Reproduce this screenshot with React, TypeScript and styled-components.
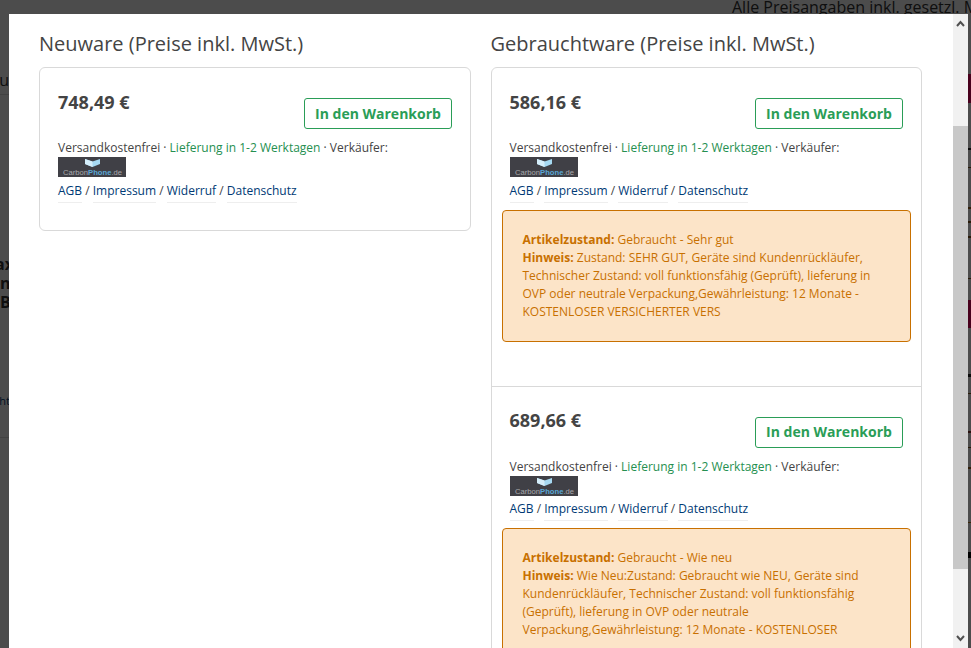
import React from "react";
import styled, { createGlobalStyle } from "styled-components";

const Global = createGlobalStyle`
  html, body { margin: 0; padding: 0; height: 100%; overflow: hidden; background: #fff; }
  #root { height: 100%; }
  * { box-sizing: border-box; }
`;

const Page = styled.div`
  position: relative;
  width: 971px;
  height: 648px;
  overflow: hidden;
  background: #fff;
  font-family: "Open Sans", "Liberation Sans", sans-serif;
`;

const BackLine = styled.div<{ $top: number }>`
  position: absolute;
  left: 0;
  top: ${(p) => p.$top}px;
  width: 9px;
  height: 1px;
  background: #ddd;
`;

const BackText = styled.span<{ $x: number; $y: number; $bold?: boolean; $size?: number; $color?: string }>`
  position: absolute;
  left: ${(p) => p.$x}px;
  top: ${(p) => p.$y}px;
  font-size: ${(p) => p.$size ?? 16}px;
  line-height: 20px;
  font-weight: ${(p) => (p.$bold ? 700 : 400)};
  color: ${(p) => p.$color ?? "#333"};
  white-space: nowrap;
`;

const BackBlock = styled.div<{ $top: number; $height: number; $color: string }>`
  position: absolute;
  left: 968px;
  top: ${(p) => p.$top}px;
  width: 3px;
  height: ${(p) => p.$height}px;
  background: ${(p) => p.$color};
`;

const Backdrop = styled.div`
  position: absolute;
  inset: 0;
  background: rgba(0, 0, 0, 0.7);
`;

const Modal = styled.div`
  position: absolute;
  left: 9px;
  top: 14px;
  width: 959px;
  height: 634px;
  display: flex;
  background: #fff;
`;

const Body = styled.div`
  flex: 1;
  min-width: 0;
  overflow: hidden;
  padding: 16px 0 0 30px;
  display: grid;
  grid-template-columns: 432px 431.5px;
  column-gap: 19.5px;
  align-items: start;
  color: #444;
`;

const Column = styled.section``;

const Title = styled.h2`
  margin: 0 0 9px;
  font-size: 20px;
  line-height: 28px;
  font-weight: 400;
  color: #444;
`;

const Card = styled.div`
  border: 1px solid #d9d9d9;
  border-radius: 6px;
`;

const Offer = styled.article<{ $divided?: boolean; $pad: number }>`
  padding: 0 18px ${(p) => p.$pad}px;
  border-top: ${(p) => (p.$divided ? "1px solid #d9d9d9" : "none")};
`;

const OfferHead = styled.div`
  display: flex;
  justify-content: space-between;
  align-items: flex-start;
  height: 71px;
  padding-top: 20.8px;
`;

const Price = styled.div`
  font-size: 18px;
  line-height: 26px;
  font-weight: 700;
  color: #444;
`;

const CartButton = styled.button`
  width: 148px;
  height: 31px;
  margin-top: 9.2px;
  padding: 0 0 0.2px;
  background: #fff;
  border: 1px solid #2a9d57;
  border-radius: 3px;
  color: #2a9d57;
  font-family: inherit;
  font-size: 14px;
  font-weight: 700;
`;

const Meta = styled.div`
  font-size: 12px;
  line-height: 18px;
  color: #444;
`;

const Delivery = styled.span`
  color: #258f50;
`;

const Logo = styled.svg`
  display: block;
  width: 68px;
  height: 20px;
`;

const Legal = styled.div`
  margin-top: 3.8px;
  font-size: 12px;
  line-height: 20px;
  color: #444;
`;

const LegalLink = styled.a`
  display: inline-block;
  color: #003a75;
  border-bottom: 1px solid #eee;
  line-height: 20px;
  padding-bottom: 1px;
`;

const Notice = styled.div`
  margin: 7px -8px 0 -7.5px;
  padding: 19.8px 19px 20.2px 19.5px;
  background: #fce4c8;
  border: 1px solid #c87000;
  border-radius: 4px;
  font-size: 12px;
  line-height: 18px;
  color: #c87000;
`;

const Scrollbar = styled.div`
  flex: none;
  width: 15px;
  height: 100%;
  background: #f1f1f1;
  display: flex;
  flex-direction: column;
  align-items: center;
`;

const ScrollArrow = styled.svg`
  flex: none;
  display: block;
  width: 15px;
  height: 17px;
`;

const ScrollThumb = styled.div`
  flex: none;
  width: 15px;
  height: 443px;
  margin-top: 95px;
  margin-bottom: 62px;
  background: #c8c8c8;
`;

const CarbonLogo = () => (
  <Logo viewBox="0 0 68 20" aria-hidden="true">
    <rect width="68" height="20" fill="#404046" />
    <path d="M27 2 L34.5 4.5 L42 2 L42 7 L34.5 10 L27 7 Z" fill="#a6d9f2" />
    <path d="M27 2 L34.5 4.5 L34.5 10 L27 7 Z" fill="#d5eefa" />
    <text
      x="5"
      y="17.5"
      textLength={59}
      lengthAdjust="spacingAndGlyphs"
      fontFamily="'Liberation Sans', sans-serif"
      fontSize="8"
      fill="#a8a8ac"
    >
      Carbon
      <tspan fill="#5aa7d6" fontWeight="700">Phone</tspan>
      .de
    </text>
  </Logo>
);

type OfferData = { price: string; zustand?: string; hinweis?: string };

const OfferBlock = ({ offer, divided, pad }: { offer: OfferData; divided?: boolean; pad: number }) => (
  <Offer $divided={divided} $pad={pad}>
    <OfferHead>
      <Price>{offer.price}</Price>
      <CartButton>In den Warenkorb</CartButton>
    </OfferHead>
    <Meta>
      Versandkostenfrei · <Delivery>Lieferung in 1-2 Werktagen</Delivery> · Verkäufer:
    </Meta>
    <CarbonLogo />
    <Legal>
      <LegalLink>AGB</LegalLink> / <LegalLink>Impressum</LegalLink> / <LegalLink>Widerruf</LegalLink> /{" "}
      <LegalLink>Datenschutz</LegalLink>
    </Legal>
    {offer.zustand && (
      <Notice>
        <b>Artikelzustand:</b> {offer.zustand}
        <br />
        <b>Hinweis:</b> {offer.hinweis}
      </Notice>
    )}
  </Offer>
);

const stripMarks: [number, number, string][] = [
  [74, 29, "#f00060"],
  [300, 28, "#f00060"],
  [148, 2, "#222222"],
  [167, 1, "#8a5a20"],
  [207, 2, "#a06a20"],
  [221, 2, "#8a5a20"],
  [236, 2, "#8a5a20"],
  [278, 1, "#8a5a20"],
  [374, 3, "#222222"],
  [393, 1, "#8a5a20"],
  [431, 2, "#8a3a30"],
  [447, 1, "#8a5a20"],
  [467, 2, "#a06a20"],
  [522, 1, "#c08020"],
  [552, 6, "#000000"],
];

export default function App() {
  return (
    <Page>
      <Global />
      <BackText $x={732} $y={-3}>Alle Preisangaben inkl. gesetzl. MwSt.</BackText>
      <BackText $x={-10} $y={70}>Zu</BackText>
      <BackLine $top={94} />
      <BackText $x={-20} $y={254} $bold>Max</BackText>
      <BackText $x={-15} $y={273} $bold>Pin</BackText>
      <BackText $x={0} $y={292} $bold>BB</BackText>
      <BackText $x={-19} $y={391} $size={11} $color="#003a75">Recht</BackText>
      <BackLine $top={437} />
      {stripMarks.map(([top, height, color]) => (
        <BackBlock key={top} $top={top} $height={height} $color={color} />
      ))}
      <Backdrop />
      <Modal>
        <Body>
          <Column>
            <Title>Neuware (Preise inkl. MwSt.)</Title>
            <Card>
              <OfferBlock offer={{ price: "748,49 €" }} pad={27.2} />
            </Card>
          </Column>
          <Column>
            <Title>Gebrauchtware (Preise inkl. MwSt.)</Title>
            <Card>
              <OfferBlock
                pad={43.8}
                offer={{
                  price: "586,16 €",
                  zustand: "Gebraucht - Sehr gut",
                  hinweis:
                    "Zustand: SEHR GUT, Geräte sind Kundenrückläufer, Technischer Zustand: voll funktionsfähig (Geprüft), lieferung in OVP oder neutrale Verpackung,Gewährleistung: 12 Monate - KOSTENLOSER VERSICHERTER VERS",
                }}
              />
              <OfferBlock
                divided
                pad={44}
                offer={{
                  price: "689,66 €",
                  zustand: "Gebraucht - Wie neu",
                  hinweis:
                    "Wie Neu:Zustand: Gebraucht wie NEU, Geräte sind Kundenrückläufer, Technischer Zustand: voll funktionsfähig (Geprüft), lieferung in OVP oder neutrale Verpackung,Gewährleistung: 12 Monate - KOSTENLOSER",
                }}
              />
            </Card>
          </Column>
        </Body>
        <Scrollbar>
          <ScrollArrow viewBox="0 0 15 17" aria-hidden="true">
            <path d="M4 12 L7.5 8 L11 12" fill="none" stroke="#505050" strokeWidth="2" />
          </ScrollArrow>
          <ScrollThumb />
          <ScrollArrow viewBox="0 0 15 17" aria-hidden="true">
            <path d="M4 5 L7.5 9 L11 5" fill="none" stroke="#505050" strokeWidth="2" />
          </ScrollArrow>
        </Scrollbar>
      </Modal>
    </Page>
  );
}
